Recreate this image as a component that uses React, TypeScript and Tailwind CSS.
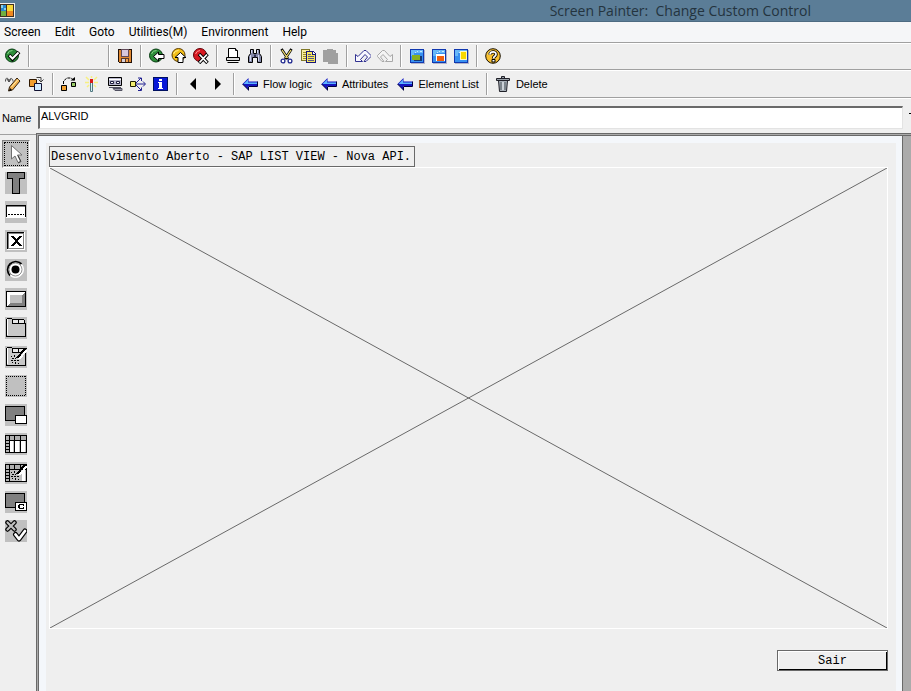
import type { ReactNode } from "react";
import clsx from "clsx";

type IconProps = { children: ReactNode };

function Icon({ children }: IconProps) {
  return (
    <svg viewBox="0 0 16 16" className="size-4 shrink-0" fill="none" aria-hidden="true">
      {children}
    </svg>
  );
}

function ToolIcon({ children, smooth }: IconProps & { smooth?: boolean }) {
  return (
    <svg
      viewBox="0 0 22 22"
      className="size-[22px] shrink-0"
      fill="none"
      shapeRendering={smooth ? "auto" : "crispEdges"}
      aria-hidden="true"
    >
      <path fill="#c0c0c0" d="M0 0h22v22H0z" />
      {children}
    </svg>
  );
}

function BackArrow() {
  return (
    <Icon>
      <path d="M.5 8 6.500 2v3.500h9v4.500h-9v4z" fill="#1414c0" />
      <path d="M2 7.500 6 3.500v3h9v1.500H2z" fill="#5cb4ff" />
      <path d="M7 10.500h8.500V5.500M6.500 14.500v-4M.5 8l6 6" stroke="#00003c" />
    </Icon>
  );
}

function ImageIcon({ children }: IconProps) {
  return (
    <Icon>
      <g shapeRendering="crispEdges">
        <path d="M2 2h14v14H2z" fill="#b4b4c8" />
        <path d="M1 1h14v14H1z" fill="#1038b0" />
        <path d="M2 2h12v12H2z" fill="#3890f0" />
        <path d="M2 2h12v3H2zM2 5h3v3H2z" fill="#68b8f8" />
        <path d="M8 3h1v1H8zM11 3h2v1h-2zM6 4h1v1H6z" fill="#c8e8ff" />
        {children}
      </g>
    </Icon>
  );
}

const menus = ["Screen", "Edit", "Goto", "Utilities(M)", "Environment", "Help"];

const standardGroups: { label: string; icon: ReactNode }[][] = [
  [
    {
      label: "Save",
      icon: (
        <Icon>
          <g shapeRendering="crispEdges">
            <path d="M1 1h14v14H2l-1-1z" fill="#201008" />
            <path d="M2 2h12v12H2z" fill="#e08830" />
            <path d="M4 1h8v8H4z" fill="#604858" />
            <path d="M5 2h6v6H5z" fill="#d8c8dc" />
            <path d="M4 10h8v4H4z" fill="#583828" />
            <path d="M5 11h3v3H5z" fill="#d8d0d8" />
            <path d="M9 11h2v3H9z" fill="#f0a050" />
          </g>
        </Icon>
      ),
    },
  ],
  [
    {
      label: "Back",
      icon: (
        <Icon>
          <circle cx="7" cy="7.500" r="6.500" fill="#2c8c38" stroke="#063c10" />
          <path d="M2.500 6a5 5 0 0 1 5-3.500" stroke="#88d088" />
          <path d="M4.500 8.500 9.500 4v2.500h5.500v4H9.500V13z" fill="#fff" stroke="#000" />
        </Icon>
      ),
    },
    {
      label: "Exit",
      icon: (
        <Icon>
          <circle cx="7.500" cy="7" r="6.500" fill="#f4c018" stroke="#5c3c00" />
          <path d="M2.500 6a5 5 0 0 1 5-3.500" stroke="#fff090" />
          <path d="M9.500 4.500 15 9.500h-3v5H7v-5H4z" fill="#fff" stroke="#000" />
        </Icon>
      ),
    },
    {
      label: "Cancel",
      icon: (
        <Icon>
          <circle cx="7" cy="7" r="6.500" fill="#d81820" stroke="#600008" />
          <path d="M2.500 6a5 5 0 0 1 4.500-3.500" stroke="#ff9090" />
          <path d="m6 6 8.500 9m0-9L6 15" stroke="#000" strokeWidth="3.500" />
          <path d="m6.500 6.500 7.500 8m0-8-7.500 8" stroke="#fff" strokeWidth="1.800" />
        </Icon>
      ),
    },
  ],
  [
    {
      label: "Print",
      icon: (
        <Icon>
          <path d="M3.500 9.500v-9h7l2 2v7" fill="#fff" stroke="#000" />
          <path d="M10.500.5v2h2M1.500 9.500h13v3h-13z" fill="#ddd" stroke="#000" />
          <path d="M2.500 14.500h11" stroke="#000" />
          <path d="M4 13.500h9" stroke="#f4f4f4" />
        </Icon>
      ),
    },
    {
      label: "Find",
      icon: (
        <Icon>
          <path d="M3.500 1.500h3v4h3v-4h3v4l2 3v6h-4v-5h-5v5h-4v-6l2-3z" fill="#8488a8" stroke="#000" />
          <path d="M3.500 7v6m8-6v6M4.500 2v3m6-3v3" stroke="#d4d8f0" />
          <path d="M7 6.500h2v3H7z" fill="#303050" />
        </Icon>
      ),
    },
  ],
  [
    {
      label: "Cut",
      icon: (
        <Icon>
          <path d="m2.500 1 6.500 10M12.500 1 6 11" stroke="#000" strokeWidth="2.600" />
          <path d="m3 2 5.500 8M12 2 6.500 10" stroke="#f4e070" strokeWidth="1.300" />
          <circle cx="4" cy="13" r="1.900" fill="#fff" stroke="#202890" strokeWidth="1.300" />
          <circle cx="11" cy="13" r="1.900" fill="#fff" stroke="#202890" strokeWidth="1.300" />
        </Icon>
      ),
    },
    {
      label: "Copy",
      icon: (
        <Icon>
          <g shapeRendering="crispEdges">
            <path d="M0 1h9v12H0z" fill="#807828" />
            <path d="M1 2h7v10H1z" fill="#f8f0a0" />
            <path d="M2 4h3v1H2zM2 6h3v1H2zM2 8h3v1H2zM2 10h3v1H2z" fill="#a09020" />
            <path d="M5 3h7l3 3v9H5z" fill="#181878" />
            <path d="M6 4h5v3h3v7H6z" fill="#f8e858" />
            <path d="M12 4v2h2z" fill="#fff" />
            <path d="M7 6h3v1H7zM7 8h6v1H7zM7 10h6v1H7zM7 12h6v1H7z" fill="#585888" />
          </g>
        </Icon>
      ),
    },
    {
      label: "Paste",
      icon: (
        <Icon>
          <path d="M0 2h4V1h6v1h3v3h2v11H5v-2H0z" fill="#a0a0a0" shapeRendering="crispEdges" />
        </Icon>
      ),
    },
  ],
  [
    {
      label: "Undo",
      icon: (
        <Icon>
          <path
            d="M.5 6.500v7h7l-2-2 4.500-5 2.500 2.500-3.500 4.500h2l5-5v-1l-5-5h-2L3 8.500z"
            fill="#f8f8ff"
            stroke="#303090"
          />
        </Icon>
      ),
    },
    {
      label: "Redo",
      icon: (
        <Icon>
          <path
            d="M15.500 6.500v7h-7l2-2L6 6.500 3.500 9 7 13.500H5l-4.500-5v-1l5-5h2l5.500 6z"
            fill="#f4f4f4"
            stroke="#a8a8a8"
          />
        </Icon>
      ),
    },
  ],
  [
    {
      label: "Create session",
      icon: (
        <ImageIcon>
          <path d="M3 7h8v5H3z" fill="#88b020" />
          <path d="M11 8h2v5H5v-1h6z" fill="#183870" />
        </ImageIcon>
      ),
    },
    {
      label: "Create shortcut",
      icon: (
        <ImageIcon>
          <path d="M5 6h9v7H5z" fill="#fff" />
          <path d="M6 8h7v5H6z" fill="#f06010" />
        </ImageIcon>
      ),
    },
    {
      label: "Layout",
      icon: (
        <ImageIcon>
          <path d="M7 3h7v9H7z" fill="#fff8c0" />
          <path d="M8 4h5v7H8z" fill="#f8d800" />
        </ImageIcon>
      ),
    },
  ],
  [
    {
      label: "Help",
      icon: (
        <Icon>
          <circle cx="8" cy="8" r="7.300" fill="#f8c030" stroke="#181000" />
          <path d="M3 7a5 5 0 0 1 4-4.500" stroke="#fff4a0" />
          <path d="M5 6.500C5 3 11.500 3 11 6.500 11 8.500 8.500 8 8.500 10.500" stroke="#000" strokeWidth="3.400" />
          <path d="M5 6.500C5 3 11.500 3 11 6.500 11 8.500 8.500 8 8.500 10.500" stroke="#fff" strokeWidth="1.700" />
          <path d="M7 11.500h3v2.500H7z" fill="#fff" stroke="#000" />
        </Icon>
      ),
    },
  ],
];

const editTools = [
  {
    label: "Display / change",
    icon: (
      <Icon>
        <path d="m4.500 11 7.500-9 3 3-7.500 9-4 1z" fill="#f0b050" stroke="#302010" />
        <path d="m6.500 11 6.500-7.500" stroke="#fff0b0" />
        <path d="m4 15 1-3 2 2z" fill="#000" />
        <path d="M.5 5.500c0-5 3-4 3.500 0 .5-4 4-4 4 0M2 3l2 3 2-3" stroke="#484848" />
      </Icon>
    ),
  },
  {
    label: "Other object",
    icon: (
      <Icon>
        <path d="M1.500 3.500h7v7h-7z" fill="#f0a030" stroke="#301800" />
        <path d="M6.500 7.500h7v7h-7z" fill="#d0ecff" stroke="#101030" />
        <path d="M8.500 1.500H13v4M10.500 3.500 13 6l2.500-2.500" stroke="#404040" />
      </Icon>
    ),
  },
];

const objectTools = [
  {
    label: "Where-used list",
    icon: (
      <Icon>
        <path d="M.5 9.500h5v5h-5z" fill="#f0a030" stroke="#000" />
        <path d="M10.500 6.500h4v4h-4z" fill="#98cc68" stroke="#000" />
        <path d="M2.500 8V5L6 2h4l2.500 2" stroke="#000" strokeDasharray="3 1" />
        <path d="M9.500 4.500h4.500V1z" fill="#000" />
      </Icon>
    ),
  },
  {
    label: "Activate",
    icon: (
      <Icon>
        <path d="m2 1 3 3m8-3-3 3M1 6.500h4m5 0h4M7.500 0v2M3 11l2-2m7 2-2-2" stroke="#f8f080" strokeWidth="1.500" />
        <path d="M6 3h3v4H6z" fill="#d81818" />
        <path d="M6.500 7v8.500h2V7" fill="#d8f0f4" stroke="#507880" />
      </Icon>
    ),
  },
  {
    label: "Check layout",
    icon: (
      <Icon>
        <path d="M1.500 1.500h13v8h-13z" fill="#b8b8cc" stroke="#000" />
        <path d="M2 3.500h12" stroke="#fff" />
        <path d="M3.500 5.500h3v2h-3zM9.500 5.500h3v2h-3z" fill="#fff" stroke="#202040" />
        <path d="M2 11.500h12" stroke="#505060" />
        <path d="M6 12.500h9v2H8z" fill="#9898a8" stroke="#505060" />
      </Icon>
    ),
  },
  {
    label: "Object hierarchy",
    icon: (
      <Icon>
        <path d="M.5 5.500h5v5h-5z" fill="#f4f070" stroke="#202000" />
        <path d="M6 8h9M6 7l5-5m-5 7 5 5M8 2h3.500v3M8 14.500h3.500v-3M13 5.500l2.500 2.500L13 10.500" stroke="#202090" />
      </Icon>
    ),
  },
  {
    label: "Information",
    icon: (
      <Icon>
        <g shapeRendering="crispEdges">
          <path d="M0 1h15v14H0z" fill="#001060" />
          <path d="M1 2h13v12H1z" fill="#0818d8" />
          <path d="M6 3h3v2H6zM5 6h4v6h1v1H5v-1h1V7H5z" fill="#fff" />
        </g>
      </Icon>
    ),
  },
];

const jumps = ["Flow logic", "Attributes", "Element List"];

const panelShape = (
  <>
    <path fill="#000" d="M0 2h20v15H0z" />
    <path fill="#808080" d="M1 3h18v13H1z" />
    <path fill="#000" d="M10 11h12v9H10z" />
    <path fill="#fff" d="M11 12h10v7H11z" />
  </>
);

const gridShape = (
  <>
    <path fill="#000" d="M0 2h22v18H0z" />
    <path
      fill="#b0b0b0"
      d="M1 3h3v4H1zM5 3h4v4H5zM10 3h5v4h-5zM16 3h5v4h-5zM1 8h3v2H1zM1 11h3v2H1zM1 14h3v2H1zM1 17h3v2H1z"
    />
    <path fill="#fff" d="M5 8h4v11H5zM10 8h5v11h-5zM16 8h5v11h-5z" />
    <path fill="#c0c0c0" d="M8 8h1v11H8zM14 8h1v11h-1zM20 8h1v11h-1z" />
  </>
);

const wandShape = (
  <>
    <path d="m14 13 8-9" stroke="#fff" strokeWidth="2" />
    <path d="m12 12 9-10" stroke="#000" strokeWidth="2" />
    <path
      fill="#000"
      d="M6 10h1v1H6zM9 9h1v2H9zM7 12h2v1H7zM10 12h1v1h-1zM6 14h2v1H6zM9 14h2v1H9zM12 14h2v1h-2zM7 16h1v1H7zM10 16h1v2h-1zM13 17h1v1h-1z"
    />
  </>
);

const tabShape = (
  <>
    <path fill="#000" d="M1 2h1V1h5v1h12v1h1v3h1v14H1z" />
    <path fill="#c8c8c8" d="M2 2h5v5h13v12H2z" />
    <path fill="#000" d="M7 2h1v5H7zM7 6h13v1H7zM13 2h1v5h-1z" />
    <path fill="#e8e8e8" d="M8 3h5v3H8zM14 3h5v3h-5z" />
    <path fill="#fff" d="M2 2h1v16H2z" />
  </>
);

const palette = [
  {
    label: "Select",
    icon: (
      <ToolIcon smooth>
        <path d="M6.500 2.500v13.500l3.500-3 3 6.500 2.500-1-3-6.500h4.500z" fill="#fff" stroke="#707070" />
        <path d="m13 12.500 3 6-3 1.500" stroke="#404040" />
      </ToolIcon>
    ),
  },
  {
    label: "Text field",
    icon: (
      <ToolIcon>
        <path fill="#000" d="M2 0h18v7h-5v15H7V7H2z" />
        <path fill="#808080" d="M3 1h16v5h-5v15H8V6H3z" />
      </ToolIcon>
    ),
  },
  {
    label: "Input/output field",
    icon: (
      <ToolIcon>
        <path fill="#000" d="M1 4h20v13H1z" />
        <path fill="#fff" d="M2 6h18v10H2z" />
        <path fill="#808080" d="M2 5h18v1H2z" />
        <path d="M3 13.500h16" stroke="#000" strokeDasharray="2 1" />
        <path fill="#fff" d="M1 16h20v1H1z" />
      </ToolIcon>
    ),
  },
  {
    label: "Checkbox",
    icon: (
      <ToolIcon>
        <path fill="#fff" d="M2 2h18v18H2z" />
        <path fill="#000" d="M2 2h17v17H2z" />
        <path fill="#808080" d="M3 3h16v16H3z" />
        <path fill="#fff" d="M4 4h14v14H4z" />
        <path fill="#000" d="M6 6h3v1h1v1h1v1h1V8h1V7h1V6h3v1h-1v1h-1v1h-1v1h-1v2h1v1h1v1h1v1h1v1h-3v-1h-1v-1h-1v-1h-1v1h-1v1H9v1H6v-1h1v-1h1v-1h1v-1h1v-2H9V9H8V8H7V7H6z" />
      </ToolIcon>
    ),
  },
  {
    label: "Radio button",
    icon: (
      <ToolIcon smooth>
        <circle cx="10.500" cy="10.500" r="8" fill="#fff" stroke="#fff" />
        <path d="M5 16.500A8 8 0 0 1 16.500 5" stroke="#000" strokeWidth="1.800" />
        <circle cx="10.500" cy="10.500" r="6.500" stroke="#909090" />
        <circle cx="10.500" cy="10.500" r="4" fill="#000" />
      </ToolIcon>
    ),
  },
  {
    label: "Pushbutton",
    icon: (
      <ToolIcon>
        <path fill="#000" d="M1 3h20v16H1z" />
        <path fill="#fff" d="M2 4h18l-3 3H5v8l-3 3z" />
        <path fill="#808080" d="M20 4v14H2l3-3h12V7z" />
        <path fill="#c0c0c0" d="M5 7h12v8H5z" />
      </ToolIcon>
    ),
  },
  { label: "Tabstrip control", icon: <ToolIcon>{tabShape}</ToolIcon> },
  {
    label: "Tabstrip wizard",
    icon: (
      <ToolIcon>
        {tabShape}
        {wandShape}
      </ToolIcon>
    ),
  },
  {
    label: "Box",
    icon: (
      <ToolIcon>
        <path d="M1 1.500h20M1 20.500h20M1.500 1v20M20.500 1v20" stroke="#000" strokeDasharray="1 1" />
      </ToolIcon>
    ),
  },
  { label: "Subscreen area", icon: <ToolIcon>{panelShape}</ToolIcon> },
  { label: "Table control", icon: <ToolIcon>{gridShape}</ToolIcon> },
  {
    label: "Table control wizard",
    icon: (
      <ToolIcon>
        {gridShape}
        <path fill="#c0c0c0" d="M5 8h12v11H5z" />
        {wandShape}
      </ToolIcon>
    ),
  },
  {
    label: "Custom control",
    icon: (
      <ToolIcon>
        {panelShape}
        <path fill="#000" d="M14 13h5v1h-5zM13 14h2v3h-2zM14 17h5v1h-5zM18 14h1v1h-1zM18 16h1v1h-1z" />
      </ToolIcon>
    ),
  },
  {
    label: "Status icon",
    icon: (
      <ToolIcon smooth>
        <path d="m2.500 2.500 7 7m0-7-7 7" stroke="#000" strokeWidth="4.500" strokeLinecap="round" />
        <path d="m2.500 2.500 7 7m0-7-7 7" stroke="#c0c0c0" strokeWidth="2.200" strokeLinecap="round" />
        <path d="m10.500 14.500 3.500 4.500 6-8" stroke="#000" strokeWidth="5" strokeLinecap="round" strokeLinejoin="round" />
        <path d="m10.500 14.500 3.500 4.500 6-8" stroke="#fff" strokeWidth="2.800" strokeLinecap="round" strokeLinejoin="round" />
      </ToolIcon>
    ),
  },
];

function Separator() {
  return <div className="mx-[7px] h-[22px] w-0.5 shrink-0 border-l border-[#a0a0a0] bg-white" />;
}

function IconButton({ label, children }: { label: string; children: ReactNode }) {
  return (
    <button type="button" aria-label={label} title={label} className="shrink-0">
      {children}
    </button>
  );
}

export default function App() {
  return (
    <div className="flex min-h-screen flex-col bg-[#efefef] font-['Liberation_Sans',Arial,sans-serif] text-[11px] text-black">
      <header className="flex h-[22px] items-center border-b border-[#4d6b82] bg-[#5b7d97]">
        <svg viewBox="0 0 15 15" className="size-[15px] shrink-0" shapeRendering="crispEdges" aria-hidden="true">
          <path fill="#f4f0e8" d="M0 0h15v15H0z" />
          <path fill="#403020" d="M0 1h14v13H0z" />
          <path fill="#2888d0" d="M1 2h5v6H1z" />
          <path fill="#88d0e8" d="M1 2h2v3H1zM4 5h2v2H4z" />
          <path fill="#f8d838" d="M7 2h6v6H7z" />
          <path fill="#70b040" d="M1 8h5v5H1z" />
          <path fill="#f08820" d="M7 8h6v5H7z" />
        </svg>
        <h1 className="w-full pr-[100px] text-right font-['Open_Sans','Noto_Sans',sans-serif] text-[14px] leading-5 whitespace-pre text-[#24343f]">
          Screen Painter:{"  "}Change Custom Control
        </h1>
      </header>

      <nav className="flex h-[21px] items-center gap-3.5 border-b border-[#a0a0a0] bg-[#f5f6f8] pl-1 font-[Roboto,'Noto_Sans',sans-serif] text-[12px] leading-5">
        {menus.map((menu) => (
          <button key={menu} type="button">
            {menu}
          </button>
        ))}
      </nav>

      <div className="flex h-[27px] items-center border-t border-b border-t-white border-b-[#a0a0a0] pb-0.5 pl-[5px]">
        <IconButton label="Enter">
          <Icon>
            <circle cx="7" cy="7.500" r="6.500" fill="#2c8c38" stroke="#063c10" />
            <path d="M2.500 6a5 5 0 0 1 5-3.500" stroke="#88d088" />
            <path d="m4 7 3.500 4 6.500-7" stroke="#000" strokeWidth="3.800" />
            <path d="m4.500 7.500 3 3 6-6" stroke="#fff" strokeWidth="2" />
          </Icon>
        </IconButton>
        <Separator />
        <div className="w-16" />
        {standardGroups.map((group, index) => (
          <div key={index} className="flex items-center">
            <Separator />
            <div className="flex gap-1.5">
              {group.map((tool) => (
                <IconButton key={tool.label} label={tool.label}>
                  {tool.icon}
                </IconButton>
              ))}
            </div>
          </div>
        ))}
      </div>

      <div className="flex h-7 items-center border-t border-b border-t-white border-b-[#a0a0a0] pl-[5px]">
        <div className="flex gap-[7px] pr-px">
          {editTools.map((tool) => (
            <IconButton key={tool.label} label={tool.label}>
              {tool.icon}
            </IconButton>
          ))}
        </div>
        <Separator />
        <div className="flex gap-[7px]">
          {objectTools.map((tool) => (
            <IconButton key={tool.label} label={tool.label}>
              {tool.icon}
            </IconButton>
          ))}
        </div>
        <Separator />
        <div className="flex gap-[9px]">
          <IconButton label="Previous">
            <Icon>
              <path d="M11 2v12L5 8z" fill="#000" />
            </Icon>
          </IconButton>
          <IconButton label="Next">
            <Icon>
              <path d="M5 2v12l6-6z" fill="#000" />
            </Icon>
          </IconButton>
        </div>
        <Separator />
        <div className="flex gap-[9px]">
          {jumps.map((jump) => (
            <button key={jump} type="button" className="flex items-center gap-[5px] whitespace-nowrap">
              <BackArrow />
              {jump}
            </button>
          ))}
        </div>
        <Separator />
        <button type="button" className="flex items-center gap-[5px]">
          <Icon>
            <path d="M3.500 4.500h9l-1 11h-7z" fill="#a8b0b8" stroke="#202028" />
            <path d="M6 6v8m4-8v8" stroke="#50585f" />
            <path d="M8 6v8" stroke="#f0f4f8" />
            <path d="M1.500 2.500h13v2h-13zM6.500 2.500v-2h3v2" fill="#98a0a8" stroke="#202028" />
          </Icon>
          Delete
        </button>
      </div>

      <div className="flex h-[35px] border-t border-white pt-[7px] pl-0.5">
        <label htmlFor="element-name" className="w-9 pt-1 leading-4">
          Name
        </label>
        <input
          id="element-name"
          defaultValue="ALVGRID"
          className="h-[23px] min-w-0 flex-1 border border-t-2 border-l-2 border-[#e3e3e3] border-t-[#696969] border-l-[#696969] bg-white pb-1 pl-px outline-none"
        />
        <div className="mt-[7px] ml-[6px] h-px w-0.5 bg-black" />
      </div>

      <div className="flex flex-1">
        <aside className="mt-px w-9 shrink-0 border-t border-[#a0a0a0] pt-[5px] pl-0.5">
          {palette.map((tool, index) => (
            <button
              key={tool.label}
              type="button"
              aria-label={tool.label}
              title={tool.label}
              aria-pressed={index === 0}
              className={clsx(
                "flex w-7 items-center justify-center",
                index === 0
                  ? "h-7 border border-t-[#808080] border-r-white border-b-white border-l-[#808080] bg-[#c0c0c0] outline-1 -outline-offset-3 outline-dotted outline-black"
                  : "h-[29px]",
              )}
            >
              {tool.icon}
            </button>
          ))}
        </aside>

        <main className="flex min-w-0 flex-1 border-t-[3px] border-l-[3px] border-double border-[#696969] bg-[#ababab]">
          <section className="flex min-w-0 flex-1 flex-col border-t-[7px] border-r-[6px] border-l-[7px] border-[#f4f7fb] bg-[#efefef] pt-[3px] pr-2 pb-5 pl-[3px] font-['Liberation_Mono','Courier_New',monospace] text-[12px]">
            <div className="h-[21px] self-start border border-[#696969] pr-[3px] pl-px leading-5 whitespace-pre">
              Desenvolvimento Aberto - SAP LIST VIEW - Nova API.
            </div>
            <div className="flex min-h-40 flex-1 border border-white">
              <svg
                viewBox="0 0 100 100"
                preserveAspectRatio="none"
                className="h-0 min-h-full w-full"
                shapeRendering="crispEdges"
                aria-hidden="true"
              >
                <path d="m0 0 100 100M100 0 0 100" stroke="#696969" vectorEffect="non-scaling-stroke" />
              </svg>
            </div>
            <button
              type="button"
              className="mt-[21px] h-[21px] w-[111px] self-end border border-[#696969] bg-[#efefef] leading-4 shadow-[inset_1px_1px_0_#fff,inset_-1px_-1px_0_#000]"
            >
              Sair
            </button>
          </section>
          <div className="w-[9px] shrink-0 border-l border-[#696969]" />
        </main>
      </div>
    </div>
  );
}
